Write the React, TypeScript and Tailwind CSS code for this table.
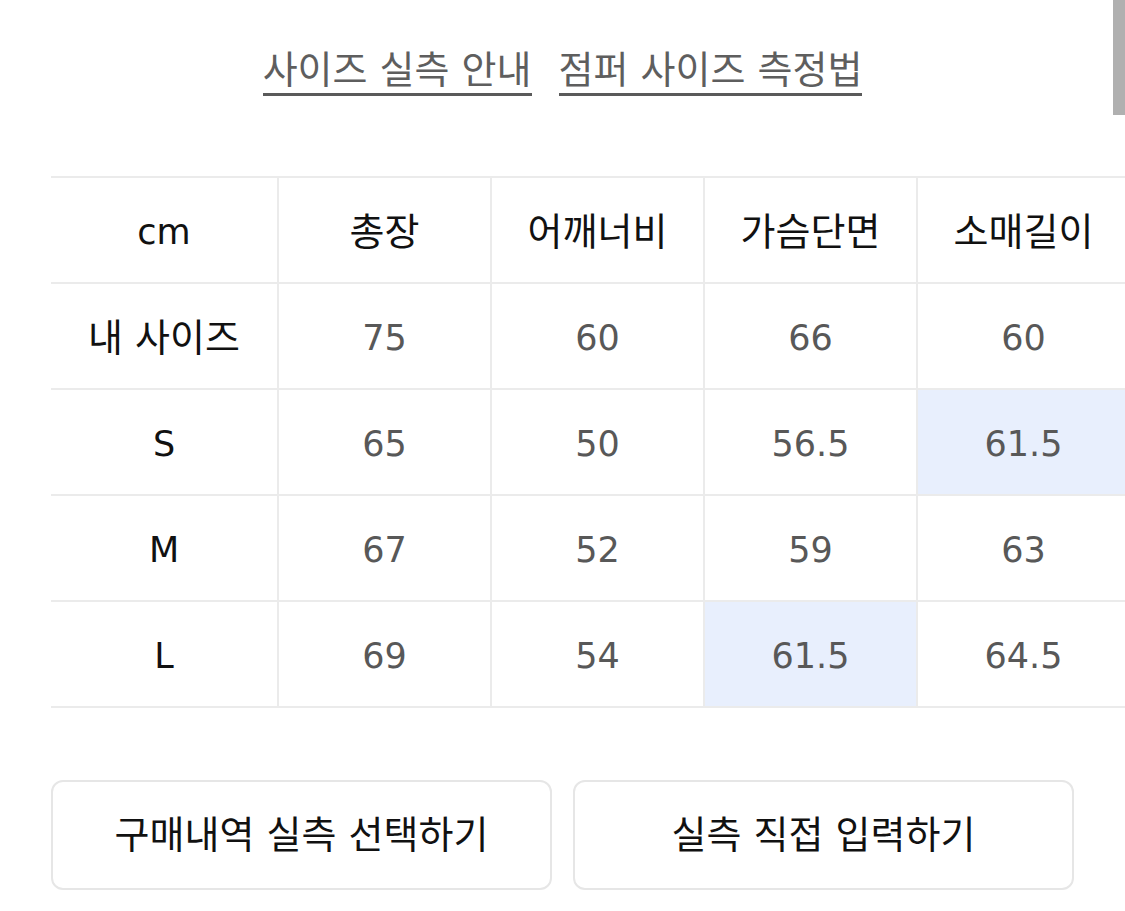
const font = { fontFamily: '"DejaVu Sans", "Noto Sans CJK KR", sans-serif' };

const columns = ["cm", "총장", "어깨너비", "가슴단면", "소매길이"];

const rows = [
  { label: "내 사이즈", values: ["75", "60", "66", "60"], hi: -1 },
  { label: "S", values: ["65", "50", "56.5", "61.5"], hi: 3 },
  { label: "M", values: ["67", "52", "59", "63"], hi: -1 },
  { label: "L", values: ["69", "54", "61.5", "64.5"], hi: 2 },
];

export default function App() {
  return (
    <div className="relative w-[1125px] h-[911px] overflow-hidden bg-white" style={font}>
      {/* scrollbar thumb */}
      <div className="absolute right-0 top-0 w-[12px] h-[115px] bg-[#b0b0b0]" />

      <div className="flex justify-center gap-[27px] pt-[51px] text-[38px] leading-none text-[#5e5e5e]">
        <span className="border-b-[3px] border-[#5a5a5a] pb-[4px]">사이즈 실측 안내</span>
        <span className="border-b-[3px] border-[#5a5a5a] pb-[4px]">점퍼 사이즈 측정법</span>
      </div>

      <div className="ml-[51px] mt-[80px] w-[1090px]">
        <div className="grid grid-cols-[226px_repeat(4,213px)] h-[106px] border-t-2 border-[#ebebeb]">
          {columns.map((c, i) => (
            <div
              key={c}
              className={`flex items-center justify-center pt-[4px] text-[#111] ${
                i > 0 ? "border-l-2 border-[#ebebeb] text-[38px]" : "text-[35px]"
              }`}
            >
              {c}
            </div>
          ))}
        </div>
        {rows.map((r, ri) => (
          <div
            key={r.label}
            className="grid grid-cols-[226px_repeat(4,213px)] h-[106px] border-t-2 border-[#ebebeb]"
          >
            <div
              className={`flex items-center justify-center pt-[4px] text-[#111] ${
                ri === 0 ? "text-[38px]" : "text-[35px]"
              }`}
            >
              {r.label}
            </div>
            {r.values.map((v, i) => (
              <div
                key={i}
                className={`flex items-center justify-center pt-[4px] border-l-2 border-[#ebebeb] text-[35px] text-[#585858] ${
                  r.hi === i ? "bg-[#e8effd]" : ""
                }`}
              >
                {v}
              </div>
            ))}
          </div>
        ))}
        <div className="border-t-2 border-[#ebebeb]" />
      </div>

      <div className="flex gap-[21px] px-[51px] mt-[72px]">
        <button className="flex-1 h-[110px] rounded-[12px] border-2 border-[#e6e6e6] text-[38px] text-[#111]">
          구매내역 실측 선택하기
        </button>
        <button className="flex-1 h-[110px] rounded-[12px] border-2 border-[#e6e6e6] text-[38px] text-[#111]">
          실측 직접 입력하기
        </button>
      </div>
    </div>
  );
}
